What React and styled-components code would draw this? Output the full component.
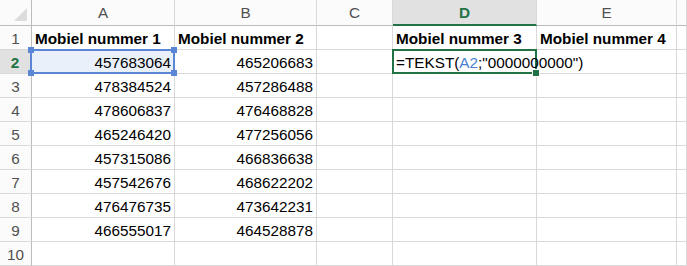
import styled, { createGlobalStyle, css } from 'styled-components'

const GlobalStyle = createGlobalStyle`
  html, body {
    margin: 0;
    padding: 0;
    background: #fff;
    overflow: hidden;
  }
  body {
    font-family: "Liberation Sans", Arial, sans-serif;
  }
`

const Sheet = styled.div`
  display: grid;
  grid-template-columns: 32px 143px 142px 76px 144px 140px 1fr;
  grid-auto-rows: 24px;
  grid-template-rows: 26px;
  width: 687px;
  height: 266px;
  overflow: hidden;
  font-size: 15.3px;
  color: #000;
`

const Corner = styled.div`
  position: relative;
  background: #fbfbfb;
  border-right: 1px solid #bcbcbc;
  border-bottom: 1px solid #bcbcbc;
  &::after {
    content: '';
    position: absolute;
    right: 4px;
    bottom: 4px;
    width: 0;
    height: 0;
    border-left: 13px solid transparent;
    border-bottom: 13px solid #dcdcdc;
  }
`

const ColHead = styled.div`
  display: flex;
  align-items: center;
  justify-content: center;
  background: #fbfbfb;
  color: #505050;
  border-right: 1px solid #d9d9d9;
  border-bottom: 1px solid #bcbcbc;
  ${p => p.$active && css`
    background: #e1e1e1;
    color: #217346;
    font-weight: bold;
    border-bottom: 2px solid #217346;
    padding-top: 1px;
  `}
`

const RowHead = styled.div`
  display: flex;
  align-items: center;
  justify-content: center;
  padding-top: 2px;
  background: #fbfbfb;
  color: #505050;
  border-right: 1px solid #bcbcbc;
  border-bottom: 1px solid #d9d9d9;
  ${p => p.$active && css`
    background: #e1e1e1;
    color: #217346;
    font-weight: bold;
    border-right: 2px solid #217346;
  `}
`

const Cell = styled.div`
  position: relative;
  display: flex;
  align-items: center;
  justify-content: ${p => (p.$num ? 'flex-end' : 'flex-start')};
  padding: 2px 3px 0 3px;
  white-space: nowrap;
  border-right: 1px solid #d9d9d9;
  border-bottom: 1px solid #d9d9d9;
  font-weight: ${p => (p.$bold ? 'bold' : 'normal')};
  ${p => p.$ref && css`
    background: #eaf0fa;
  `}
  ${p => p.$overflow && css`
    border-right-color: transparent;
  `}
`

const RefBox = styled.div`
  position: absolute;
  left: -2px;
  top: -1px;
  right: -1px;
  bottom: -1px;
  border: 2px solid #5b86d5;
  pointer-events: none;
  z-index: 2;
`

const Handle = styled.span`
  position: absolute;
  width: 6px;
  height: 6px;
  background: #5b86d5;
  ${p => (p.$v === 'top' ? 'top: -4px;' : 'bottom: -4px;')}
  ${p => (p.$h === 'left' ? 'left: -4px;' : 'right: -4px;')}
`

const ActiveBox = styled.div`
  position: absolute;
  left: -1px;
  top: -1px;
  right: -1px;
  bottom: -1px;
  border: 2px solid #217346;
  pointer-events: none;
  z-index: 3;
`

const FillHandle = styled.span`
  position: absolute;
  right: -5px;
  bottom: -5px;
  width: 6px;
  height: 6px;
  background: #217346;
  border: 1px solid #fff;
`

const Formula = styled.span`
  position: relative;
  z-index: 4;
`

const RefText = styled.span`
  color: #4a7fd0;
`

const rows = [
  ['457683064', '465206683'],
  ['478384524', '457286488'],
  ['478606837', '476468828'],
  ['465246420', '477256056'],
  ['457315086', '466836638'],
  ['457542676', '468622202'],
  ['476476735', '473642231'],
  ['466555017', '464528878'],
]

const cols = ['A', 'B', 'C', 'D', 'E', '']

const App = () => {
  return (
    <>
      <GlobalStyle />
      <Sheet>
        <Corner />
        {cols.map((c, i) => (
          <ColHead key={i} $active={c === 'D'}>{c}</ColHead>
        ))}

        <RowHead>1</RowHead>
        <Cell $bold>Mobiel nummer 1</Cell>
        <Cell $bold>Mobiel nummer 2</Cell>
        <Cell />
        <Cell $bold>Mobiel nummer 3</Cell>
        <Cell $bold>Mobiel nummer 4</Cell>
        <Cell />

        {rows.map((r, i) => {
          const n = i + 2
          const first = n === 2
          return [
            <RowHead key={`h${n}`} $active={first}>{n}</RowHead>,
            <Cell key={`a${n}`} $num $ref={first}>
              {r[0]}
              {first && (
                <RefBox>
                  <Handle $v="top" $h="left" />
                  <Handle $v="top" $h="right" />
                  <Handle $v="bottom" $h="left" />
                  <Handle $v="bottom" $h="right" />
                </RefBox>
              )}
            </Cell>,
            <Cell key={`b${n}`} $num>{r[1]}</Cell>,
            <Cell key={`c${n}`} />,
            <Cell key={`d${n}`} $overflow={first}>
              {first && (
                <>
                  <Formula>=TEKST(<RefText>A2</RefText>;"0000000000")</Formula>
                  <ActiveBox><FillHandle /></ActiveBox>
                </>
              )}
            </Cell>,
            <Cell key={`e${n}`} />,
            <Cell key={`f${n}`} />,
          ]
        })}

        <RowHead>10</RowHead>
        <Cell />
        <Cell />
        <Cell />
        <Cell />
        <Cell />
        <Cell />
      </Sheet>
    </>
  )
}

export default App
